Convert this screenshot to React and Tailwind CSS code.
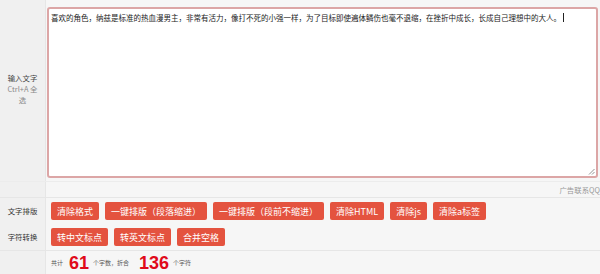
import React from "react";

const cjk = { fontFamily: '"Noto Sans CJK SC", "Noto Sans", sans-serif' };

function Btn({ children }) {
  return (
    <span className="inline-flex h-[18px] items-center rounded-[2px] bg-[#e4533f] px-[6px] text-[9px] leading-none text-white">
      {children}
    </span>
  );
}

export default function App() {
  const text =
    "喜欢的角色，纳兹是标准的热血漫男主，非常有活力，像打不死的小强一样，为了目标即使遍体鳞伤也毫不退缩，在挫折中成长，长成自己理想中的大人。";
  return (
    <div className="h-[274px] w-[600px] overflow-hidden bg-[#f6f6f6]" style={cjk}>
      {/* Row A: textarea */}
      <div className="flex h-[181px]">
        <div className="flex w-[46px] shrink-0 flex-col items-center justify-center border-r border-[#e6e6e6] bg-[#f0f0f0] pb-[4px] text-center text-[7.4px] leading-[11px]">
          <div className="text-[#444]">输入文字</div>
          <div className="px-[4px] text-[#888]">Ctrl+A 全选</div>
        </div>
        <div className="flex-1 pl-[1px] pr-[2px] pt-[7px] pb-[3px]">
          <div className="relative h-full w-full rounded-[3px] border-2 border-[#dca6a6] bg-white px-[2px] py-[3px] text-[7.5px] leading-[11px] text-[#222]">
            {text}
            <span className="ml-[2px] inline-block h-[9px] w-px translate-y-[1px] bg-[#222]" />
            <svg className="absolute bottom-[1px] right-[1px]" width="7" height="7" viewBox="0 0 7 7">
              <line x1="1" y1="6.5" x2="6.5" y2="1" stroke="#777" strokeWidth="0.8" />
              <line x1="4" y1="6.5" x2="6.5" y2="4" stroke="#777" strokeWidth="0.8" />
            </svg>
          </div>
        </div>
      </div>
      {/* Row B */}
      <div className="flex h-[16px] border-t border-[#ececec]">
        <div className="w-[46px] shrink-0 border-r border-[#e6e6e6] bg-[#f0f0f0]" />
        <div className="flex flex-1 items-center justify-end whitespace-nowrap text-[7.4px] text-[#999]">
          <span>广告联系QQ</span>
        </div>
      </div>
      {/* Row C */}
      <div className="flex h-[27px] border-t border-[#e6e6e6]">
        <div className="flex w-[46px] shrink-0 items-center justify-center border-r border-[#e6e6e6] bg-[#f0f0f0] text-[7.4px] text-[#333]">
          文字排版
        </div>
        <div className="flex flex-1 items-center gap-[6px] pl-[5px]">
          <Btn>清除格式</Btn>
          <Btn>一键排版（段落缩进）</Btn>
          <Btn>一键排版（段前不缩进）</Btn>
          <Btn>清除HTML</Btn>
          <Btn>清除js</Btn>
          <Btn>清除a标签</Btn>
        </div>
      </div>
      {/* Row D */}
      <div className="flex h-[26px]">
        <div className="flex w-[46px] shrink-0 items-center justify-center border-r border-[#e6e6e6] bg-[#f0f0f0] text-[7.4px] text-[#333]">
          字符转换
        </div>
        <div className="flex flex-1 items-center gap-[6px] pl-[5px]">
          <Btn>转中文标点</Btn>
          <Btn>转英文标点</Btn>
          <Btn>合并空格</Btn>
        </div>
      </div>
      {/* Row E */}
      <div className="flex h-[24px] border-t border-[#e6e6e6]">
        <div className="w-[46px] shrink-0 border-r border-[#e6e6e6] bg-[#f0f0f0]" />
        <div className="flex flex-1 items-center pl-[5px] text-[6px] text-[#555]">
          <span>共计</span>
          <span
            className="ml-[6px] mr-[4px] text-[18px] font-bold leading-none text-[#e00a1a]"
            style={{ fontFamily: '"Liberation Sans", Arial, sans-serif' }}
          >
            61
          </span>
          <span>个字数，折合</span>
          <span
            className="ml-[10px] mr-[4px] text-[18px] font-bold leading-none text-[#e00a1a]"
            style={{ fontFamily: '"Liberation Sans", Arial, sans-serif' }}
          >
            136
          </span>
          <span>个字符</span>
        </div>
      </div>
    </div>
  );
}
